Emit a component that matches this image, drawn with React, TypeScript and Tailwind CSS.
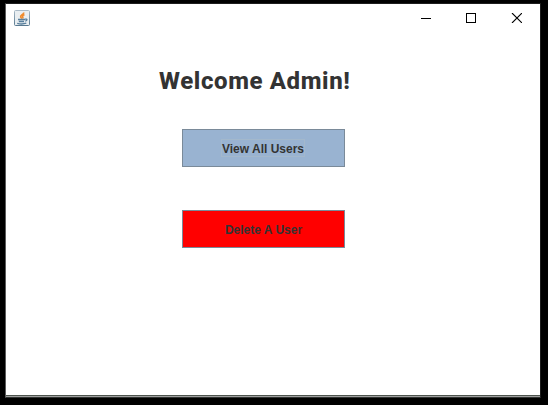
function JavaIcon() {
  return (
    <svg width="16" height="16" viewBox="0 0 16 16" className="block">
      <defs>
        <linearGradient id="tile" x1="0" y1="0" x2="0" y2="1">
          <stop offset="0" stopColor="#a9bac7" />
          <stop offset="1" stopColor="#587990" />
        </linearGradient>
      </defs>
      <rect x="0.5" y="0.5" width="15" height="15" rx="1" fill="#e9eef1" stroke="url(#tile)" />
      <path d="M9.8 2.5C10 4.5 6.2 5 6.6 6.8C6.8 7.6 7.6 8 8 8.7M10.5 4.7C8.8 5.2 8.1 6 8.8 7C9.1 7.5 8.9 8 8.5 8.4" fill="none" stroke="#ef8a2c" strokeWidth="1.6" />
      <path d="M4 9.5H11M4.8 11.5H10M3.2 13.4C5.5 14 10 14 12.3 13.2M11 9.2C13.8 8.6 13.4 10.8 11.2 11.1" fill="none" stroke="#587f9d" strokeWidth="1.3" />
    </svg>
  );
}

function WindowControls() {
  return (
    <div className="flex gap-[35px] pr-[18px] pt-[9px]">
      <svg width="10" height="10" viewBox="0 0 10 10" shapeRendering="crispEdges">
        <path d="M0 5.5H10" stroke="#000" />
      </svg>
      <svg width="10" height="10" viewBox="0 0 10 10" shapeRendering="crispEdges">
        <rect x="0.5" y="0.5" width="9" height="9" fill="none" stroke="#000" />
      </svg>
      <svg width="11" height="10" viewBox="0 0 11 10">
        <path d="M1 0L11 10M11 0L1 10" stroke="#000" strokeWidth="1.1" />
      </svg>
    </div>
  );
}

export default function App() {
  return (
    <div className="h-[405px] w-[548px] overflow-hidden bg-black pl-[5px] pt-[3px]">
      <div className="flex h-[395px] w-[536px] flex-col border-b border-l border-r border-t border-b-[#303331] border-l-[#5c5c5c] border-r-[#1d1d1d] border-t-[#1d1d1d] bg-white font-['Liberation_Sans',Arial,sans-serif]">
        <header className="flex h-[30px] shrink-0 justify-between">
          <div className="pl-2 pt-[6px]">
            <JavaIcon />
          </div>
          <WindowControls />
        </header>
        <main className="flex grow flex-col items-start">
          <h1 className="ml-[153px] mt-[32px] h-[30px] whitespace-nowrap font-[Roboto,sans-serif] text-[24px] font-extrabold leading-[30px] tracking-[0.62px] text-[#333333]">
            Welcome Admin!
          </h1>
          <button className="ml-[176px] mt-[33px] flex h-[38px] w-[163px] items-center justify-center border border-[#7a8a99] bg-[#99b3d1] text-[12px] font-bold text-[#333333]">
            <span className="mr-px flex h-[18px] w-[84px] items-center justify-center whitespace-nowrap border border-[#a3b8cc] pt-px">View All Users</span>
          </button>
          <button className="ml-[176px] mt-[43px] flex h-[38px] w-[163px] items-center justify-center border border-[#7a8a99] bg-[#ff0000] pt-px text-[12px] font-bold text-[#333333]">
            <span className="whitespace-nowrap">Delete A User</span>
          </button>
        </main>
        <div className="h-px shrink-0 bg-[#4c534d]" />
        <div className="h-px shrink-0 bg-[#a0a0a0]" />
      </div>
    </div>
  );
}
